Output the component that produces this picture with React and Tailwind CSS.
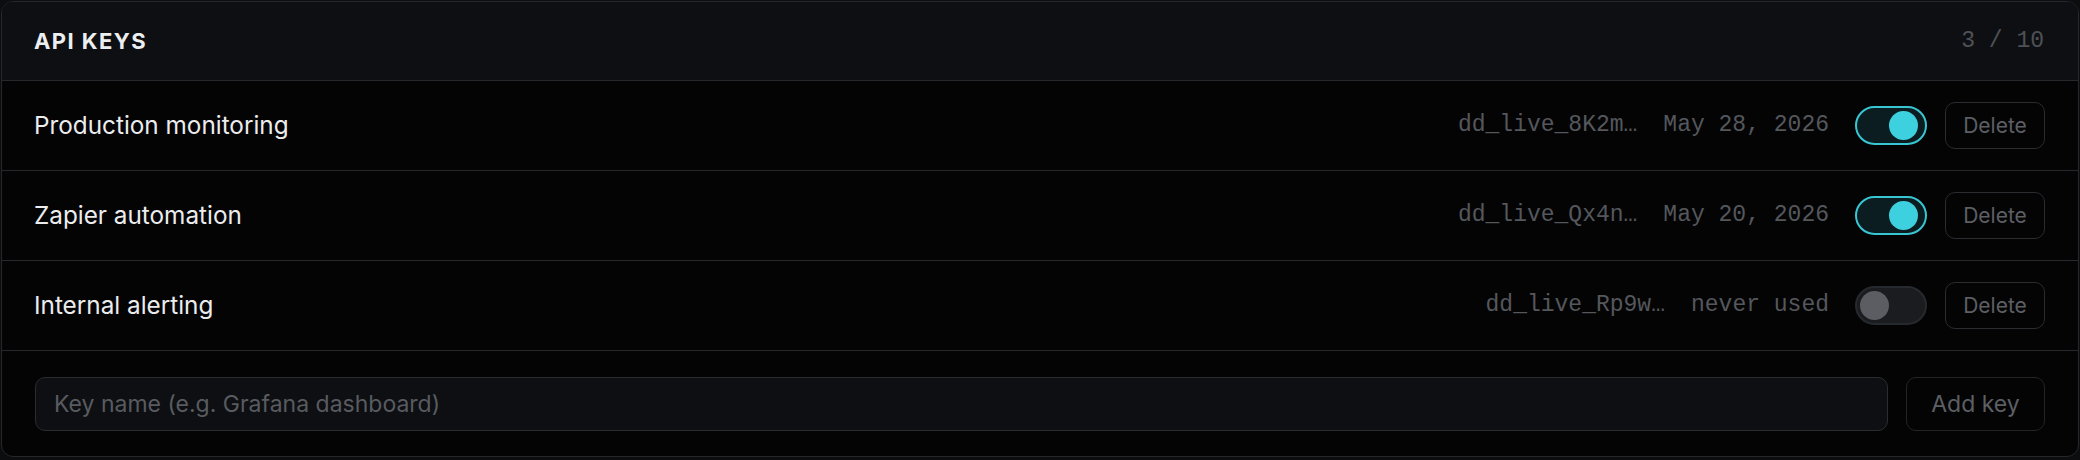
import React from "react";

const keys = [
  { name: "Production monitoring", key: "dd_live_8K2m…", used: "May 28, 2026", on: true },
  { name: "Zapier automation", key: "dd_live_Qx4n…", used: "May 20, 2026", on: true },
  { name: "Internal alerting", key: "dd_live_Rp9w…", used: "never used", on: false },
];

function Toggle({ on }) {
  return (
    <div
      className={
        on
          ? "relative w-[72px] h-[39px] rounded-full border-2 border-[#38c6d3] bg-[#0b1d21]"
          : "relative w-[72px] h-[39px] rounded-full border-2 border-[#26292d] bg-[#1a1c1f]"
      }
    >
      <div
        className={
          on
            ? "absolute top-[3px] left-[32px] w-[29px] h-[29px] rounded-full bg-[#3dd0de]"
            : "absolute top-[3px] left-[3px] w-[29px] h-[29px] rounded-full bg-[#5b5d62]"
        }
      />
    </div>
  );
}

export default function App() {
  return (
    <div className="w-[2080px] h-[460px] bg-[#0c0d0f] p-px" style={{ fontFamily: "Inter, 'Noto Sans', sans-serif" }}>
      <div className="rounded-[12px] border border-[#25272b] overflow-hidden bg-[#040405]">
        <div className="h-[79px] flex items-center justify-between pl-[32px] pr-[34px] bg-[#0e0f12] border-b border-[#26282c]">
          <div className="text-[22px] font-bold tracking-[0.065em] text-[#eceef0]">API KEYS</div>
          <div className="text-[23px] text-[#4e5156]" style={{ fontFamily: "'Liberation Mono', monospace" }}>3 / 10</div>
        </div>
        {keys.map((k) => (
          <div key={k.name} className="h-[90px] flex items-center justify-between pl-[32px] pr-[33px] border-b border-[#26282c]">
            <div className="text-[24.3px] text-[#ececee]">{k.name}</div>
            <div className="flex items-center">
              <div className="flex items-center gap-[26px] text-[23px] text-[#54575c]" style={{ fontFamily: "'Liberation Mono', monospace" }}>
                <span>{k.key}</span>
                <span>{k.used}</span>
              </div>
              <div className="ml-[26px]">
                <Toggle on={k.on} />
              </div>
              <button className="ml-[18px] w-[100px] h-[47px] rounded-[10px] border border-[#2a2c30] bg-transparent text-[21px] text-[#5c5f64]">
                Delete
              </button>
            </div>
          </div>
        ))}
        <div className="flex items-center gap-[18px] px-[33px] pt-[26px] pb-[25px]">
          <div className="flex-1 h-[54px] rounded-[10px] border border-[#2a2c30] bg-[#0e0f12] flex items-center pl-[18px]">
            <span className="text-[23px] text-[#585b60]">Key name (e.g. Grafana dashboard)</span>
          </div>
          <button className="w-[139px] h-[54px] rounded-[10px] border border-[#222428] bg-transparent text-[23px] text-[#5c5f64]">
            Add key
          </button>
        </div>
      </div>
    </div>
  );
}
